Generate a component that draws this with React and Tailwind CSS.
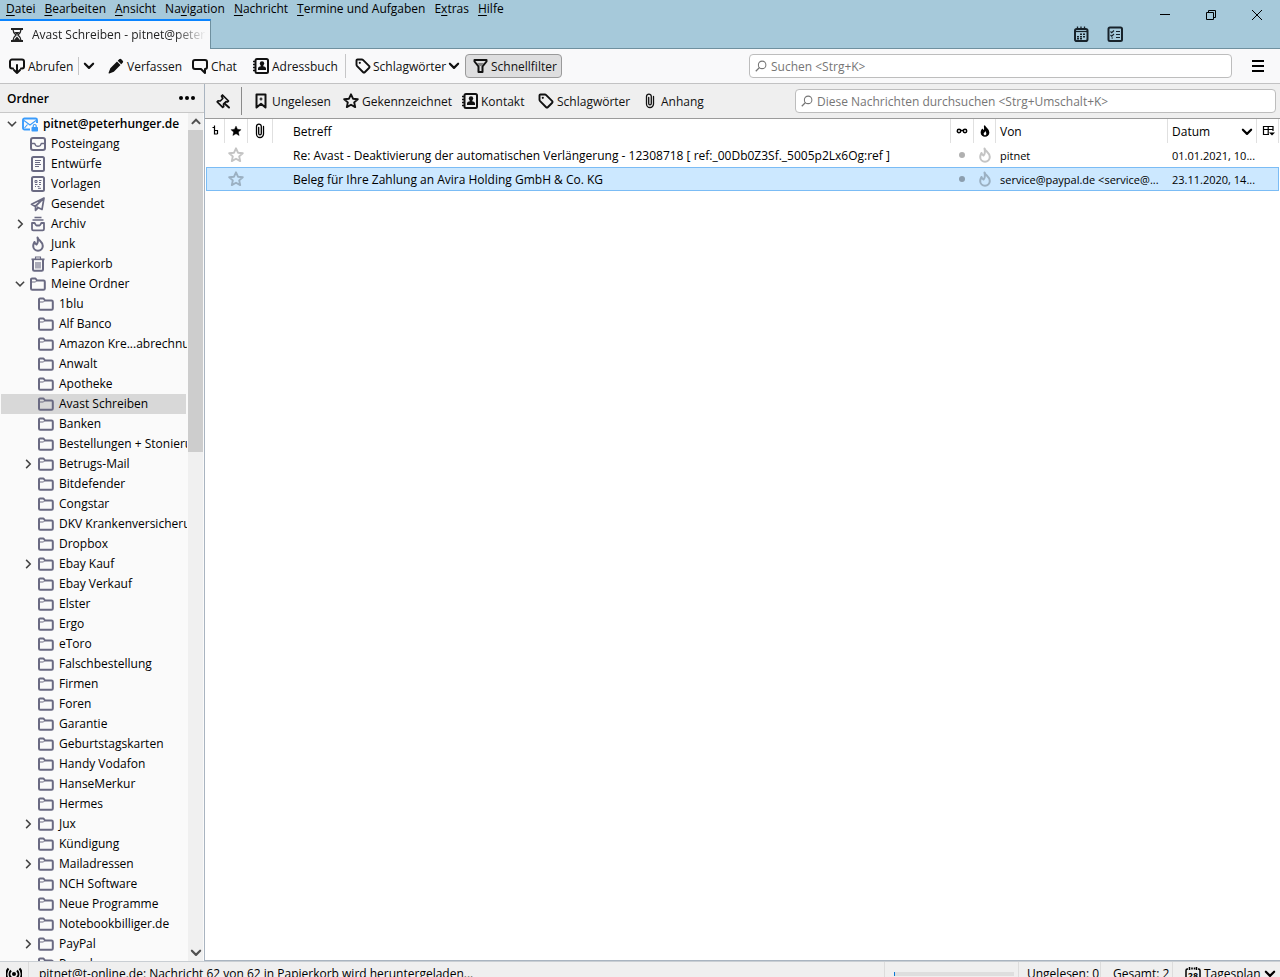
import React from "react";

const stroke = { fill: "none", stroke: "currentColor", strokeWidth: 2, strokeLinejoin: "round", strokeLinecap: "round" };

function Svg({ children, className = "size-4" }) {
  return (
    <svg viewBox="0 0 16 16" className={`${className} shrink-0`} aria-hidden="true">
      {children}
    </svg>
  );
}

const Hourglass = () => (
  <Svg>
    <path d="M2 2h12M2 14h12" stroke="currentColor" strokeWidth="2" />
    <path d="M4 2.500c0 3 1.200 4 3 5.500-1.800 1.500-3 2.500-3 5.500M12 2.500c0 3-1.200 4-3 5.500 1.800 1.500 3 2.500 3 5.500" fill="none" stroke="currentColor" strokeWidth="1.300" />
    <path d="M5.500 5h5L8 8zM8 9.500l3 3.500H5z" fill="currentColor" />
  </Svg>
);
const Download = () => (
  <Svg>
    <path d="M4 10.500H3a2 2 0 0 1-2-2V3.500a2 2 0 0 1 2-2h10a2 2 0 0 1 2 2v5a2 2 0 0 1-2 2h-1" {...stroke} />
    <path d="M8 7v8M5 12l3 3 3-3" {...stroke} />
  </Svg>
);
const Pencil = () => (
  <Svg>
    <path d="M11.200 1.300a1.500 1.500 0 0 1 2.100 0l1.400 1.400a1.500 1.500 0 0 1 0 2.100l-1.500 1.500-3.500-3.500zM9 3.500L12.500 7l-6.700 6.700-4.500 1.700a.5.5 0 0 1-.7-.7l1.700-4.500z" fill="currentColor" />
  </Svg>
);
const Chat = () => (
  <Svg>
    <path d="M3 2h10a2 2 0 0 1 2 2v5a2 2 0 0 1-2 2v4L9 11H3a2 2 0 0 1-2-2V4a2 2 0 0 1 2-2z" {...stroke} />
  </Svg>
);
const Book = () => (
  <Svg>
    <rect x="2.500" y="1" width="12.500" height="14" rx="1.500" fill="none" stroke="currentColor" strokeWidth="2" />
    <path d="M0 3.500h3M0 6.500h3M0 9.500h3M0 12.500h3" stroke="currentColor" strokeWidth="1.500" />
    <circle cx="9" cy="5.500" r="2.200" fill="currentColor" />
    <path d="M5 12V10.500C5 9 7 8.500 7.800 8.300V7h2.400v1.300c.8.200 2.800.7 2.800 2.200V12z" fill="currentColor" />
  </Svg>
);
const Tag = () => (
  <Svg>
    <path d="M1.500 2.500a1 1 0 0 1 1-1h4.300a2 2 0 0 1 1.400.6l5.800 5.800a1.500 1.500 0 0 1 0 2.100L10 14a1.500 1.500 0 0 1-2.100 0L2.100 8.200a2 2 0 0 1-.6-1.400z" fill="none" stroke="currentColor" strokeWidth="1.900" />
    <circle cx="4.800" cy="4.800" r="1.100" fill="currentColor" />
  </Svg>
);
const Funnel = () => (
  <Svg>
    <path d="M1.500 2h12v1.500L9.500 8.500V14h-4V8.500l-4-5z" {...stroke} />
    <path d="M4 5h7L8.500 8h-2z" fill="currentColor" opacity=".45" />
  </Svg>
);
const Pin = () => (
  <Svg>
    <path d="M7.500 2l6 6-1.200 1-1.300-.3-2.500 2.500.2 2.300-1 .8-5.500-5.500.9-1 2.200.2 2.500-2.500L6.500 3z" fill="none" stroke="currentColor" strokeWidth="1.700" strokeLinejoin="round" />
    <path d="M9.500 10.500l4.500 4" {...stroke} />
  </Svg>
);
const Bookmark = () => (
  <Svg>
    <path d="M3.500 1.500h9v13L8 10.800l-4.500 3.700z" {...stroke} />
    <path d="M8 4.500v3M6.500 6h3" stroke="currentColor" strokeWidth="1.200" />
  </Svg>
);
const STAR = "M8 1.300l2 4.400 4.800.5-3.600 3.200 1 4.700L8 11.700l-4.200 2.400 1-4.700L1.200 6.200 6 5.700z";
const Star = ({ solid, className }) => (
  <Svg className={className}>
    <path d={STAR} fill={solid ? "currentColor" : "none"} stroke="currentColor" strokeWidth={solid ? 0.5 : 1.9} strokeLinejoin="round" />
  </Svg>
);
const Paperclip = () => (
  <Svg>
    <path d="M6.700 5v6a1.300 1.300 0 0 0 2.600 0V4a2.400 2.400 0 0 0-4.800 0v7.500a3.500 3.500 0 0 0 7 0V4" transform="translate(0 -.5)" fill="none" stroke="currentColor" strokeWidth="1.300" strokeLinecap="round" />
  </Svg>
);
const Magnifier = () => (
  <Svg className="size-3">
    <circle cx="9.500" cy="6.500" r="5" fill="none" stroke="currentColor" strokeWidth="1.400" />
    <path d="M6 10l-5 5" stroke="currentColor" strokeWidth="1.600" />
  </Svg>
);
const Down = ({ thin, className = "size-3" }) => (
  <Svg className={className}>
    <path d="M2.500 5l5.500 5.500L13.500 5" fill="none" stroke="currentColor" strokeWidth={thin ? 2 : 2.9} strokeLinecap={thin ? "butt" : "round"} strokeLinejoin={thin ? "miter" : "round"} />
  </Svg>
);
const Up = () => (
  <Svg className="size-3">
    <path d="M2.500 10.500L8 5l5.500 5.500" fill="none" stroke="currentColor" strokeWidth="2.600" />
  </Svg>
);
const Right = () => (
  <Svg className="size-3">
    <path d="M5.500 2.500L11 8l-5.500 5.500" fill="none" stroke="currentColor" strokeWidth="2" />
  </Svg>
);
const Calendar = () => (
  <Svg>
    <rect x="2" y="3" width="12.500" height="12" rx="1.800" fill="none" stroke="currentColor" strokeWidth="2" />
    <path d="M4.500 .5v3M8 .5v3M11.500 .5v3" stroke="currentColor" strokeWidth="1.300" />
    <path d="M2 5.500h12" stroke="currentColor" strokeWidth="1.200" />
    <path d="M7 8.300h2M10 8.300h2M4 10.800h2M7 10.800h2M10 10.800h2M4 12.800h2M7 12.800h2" stroke="currentColor" strokeWidth="1.500" />
  </Svg>
);
const Tasks = () => (
  <Svg>
    <rect x="1.500" y="1.500" width="13.500" height="13.500" rx="1.500" fill="none" stroke="currentColor" strokeWidth="2" />
    <path d="M3.500 5.500l1.200 1.200L7 4.500M3.500 9l1.200 1.200L7 8M9 5.500h4M9 8.500h4M9 11.500h4M4.500 12h1.500" fill="none" stroke="currentColor" strokeWidth="1.100" />
  </Svg>
);
const Account = () => (
  <Svg className="size-4 text-[#3a9bfb]">
    <path d="M8 13.500H2.500A1.500 1.500 0 0 1 1 12V4a1.500 1.500 0 0 1 1.500-1.500h11A1.500 1.500 0 0 1 15 4v3" fill="none" stroke="currentColor" strokeWidth="1.900" />
    <path d="M2 4.500l6 4.500 6-4.500M2.500 12l3-3.500" fill="none" stroke="currentColor" strokeWidth="1.100" />
    <rect x="9.500" y="11" width="6.500" height="4.500" rx=".8" fill="currentColor" />
    <path d="M11.200 11.500V10a1.500 1.500 0 0 1 3 0v1.500" fill="none" stroke="currentColor" strokeWidth="1.200" />
  </Svg>
);
const Inbox = () => (
  <Svg>
    <rect x="1" y="2" width="14" height="12" rx="2" fill="none" stroke="currentColor" strokeWidth="2" />
    <path d="M1 7.500h3.500c.5 0 .8 1.800 1.500 2.300s3.300.5 4 0 1-2.300 1.500-2.300H15" fill="none" stroke="currentColor" strokeWidth="1.400" />
  </Svg>
);
const Draft = () => (
  <Svg>
    <rect x="2" y="1" width="12" height="14" rx="1.500" fill="none" stroke="currentColor" strokeWidth="2" />
    <path d="M5 4.500h6M5 6.500h5M5 8.500h6M5 10.500h4" stroke="currentColor" strokeWidth="1" />
  </Svg>
);
const Template = () => (
  <Svg>
    <rect x="2" y="1" width="12" height="14" rx="1.500" fill="none" stroke="currentColor" strokeWidth="2" />
    <path d="M5 4.500h2v2H5zM9 4.500h2.500M9 6.500h2M5 8.500h2.500M9 8.500h2M5 10.500h1M7.500 10.500h2M8 12.300h3" fill="none" stroke="currentColor" strokeWidth="1" />
  </Svg>
);
const Sent = () => (
  <Svg>
    <path d="M14 2L1.500 8.300 5 10.300zM14 2L5.500 10.500V14.300L8 11.800M14 2l-2 11.500-4.500-2.300" {...stroke} strokeWidth="1.700" />
  </Svg>
);
const Archive = () => (
  <Svg>
    <path d="M4.500 1.500h7M2.500 4h11" stroke="currentColor" strokeWidth="1.300" />
    <path d="M2 7h2.500C5 7 5.500 9.500 6.500 9.500h3c1 0 1.500-2.500 2-2.500H14v6a1.300 1.300 0 0 1-1.300 1.300H3.300A1.300 1.300 0 0 1 2 13z" {...stroke} strokeWidth="1.800" />
  </Svg>
);
const FLAME = "M7.500 1.500C8.500 4.500 12.800 5.500 12.800 10a4.800 4.800 0 0 1-9.600 0C3.200 8 4 7 4.500 6c.5 1.500 1 2 2 2.500C8 7 8.200 4.500 7.500 1.500z";
const Flame = ({ solid }) => (
  <Svg className={solid ? "size-3" : "size-4"}>
    <path d={FLAME} fill={solid ? "currentColor" : "none"} stroke="currentColor" strokeWidth="2" strokeLinejoin="round" />
    {solid && <path d="M8.500 7.500c0 1.500 1.300 2 1.300 4 0 1.300-1 2-1.800 2s-1.800-.7-1.800-2C6.200 10 8.200 9.500 8.500 7.500z" fill="#fff" />}
  </Svg>
);
const Trash = () => (
  <Svg>
    <path d="M3 4v9.500A1.300 1.300 0 0 0 4.300 14.800h7.400A1.300 1.300 0 0 0 13 13.500V4" fill="none" stroke="currentColor" strokeWidth="2" />
    <path d="M1.500 3.300h13" stroke="currentColor" strokeWidth="1.700" />
    <path d="M5.500 3V1h5v2M6 6v6.500M8 6v6.500M10 6v6.500" fill="none" stroke="currentColor" strokeWidth="1.100" />
  </Svg>
);
const Folder = () => (
  <Svg>
    <path d="M1 12.500V3.500A1 1 0 0 1 2 2.500h3.500L7 4.500h6.500A1.300 1.300 0 0 1 14.800 5.800v6.700a1.300 1.300 0 0 1-1.300 1.300H2.300A1.300 1.300 0 0 1 1 12.500z" fill="none" stroke="currentColor" strokeWidth="2" strokeLinejoin="round" />
    <path d="M2 6h3.500L7 4.500" fill="none" stroke="currentColor" strokeWidth="1" />
  </Svg>
);
const Thread = () => (
  <Svg>
    <path d="M7.500 2.500v8.500h3M5.500 4.500h2M7.500 7.500h3V11" fill="none" stroke="currentColor" strokeWidth="1.200" />
  </Svg>
);
const Glasses = () => (
  <Svg>
    <circle cx="5" cy="8" r="1.700" fill="none" stroke="currentColor" strokeWidth="1.500" />
    <circle cx="11" cy="8" r="1.700" fill="none" stroke="currentColor" strokeWidth="1.500" />
    <path d="M6.500 7.500h3" stroke="currentColor" strokeWidth="1.500" />
  </Svg>
);
const Picker = () => (
  <Svg>
    <path d="M13 8V3.500H3.500v8H9M3.500 6.500H13M8.200 3.500v8" fill="none" stroke="currentColor" strokeWidth="1.200" />
    <path d="M9 9.500h6l-3 3z" fill="currentColor" />
  </Svg>
);
const Online = () => (
  <Svg>
    <circle cx="8" cy="8" r="2" fill="currentColor" />
    <path d="M5 4.500a5 5 0 0 0 0 7M11 4.500a5 5 0 0 1 0 7M2.500 2.500a8 8 0 0 0 0 11M13.500 2.500a8 8 0 0 1 0 11" fill="none" stroke="currentColor" strokeWidth="2" />
  </Svg>
);

const MENUS = [
  ["", "D", "atei"],
  ["", "B", "earbeiten"],
  ["", "A", "nsicht"],
  ["Na", "v", "igation"],
  ["", "N", "achricht"],
  ["", "T", "ermine und Aufgaben"],
  ["E", "x", "tras"],
  ["", "H", "ilfe"],
];

const f = (name, opts = {}) => ({ name, level: 2, icon: Folder, ...opts });
const FOLDERS = [
  { name: "pitnet@peterhunger.de", level: 0, icon: Account, twisty: "open" },
  { name: "Posteingang", level: 1, icon: Inbox },
  { name: "Entwürfe", level: 1, icon: Draft },
  { name: "Vorlagen", level: 1, icon: Template },
  { name: "Gesendet", level: 1, icon: Sent },
  { name: "Archiv", level: 1, icon: Archive, twisty: "closed" },
  { name: "Junk", level: 1, icon: Flame },
  { name: "Papierkorb", level: 1, icon: Trash },
  { name: "Meine Ordner", level: 1, icon: Folder, twisty: "open" },
  f("1blu"),
  f("Alf Banco"),
  f("Amazon Kre...abrechnung"),
  f("Anwalt"),
  f("Apotheke"),
  f("Avast Schreiben", { selected: true }),
  f("Banken"),
  f("Bestellungen + Stonierung"),
  f("Betrugs-Mail", { twisty: "closed" }),
  f("Bitdefender"),
  f("Congstar"),
  f("DKV Krankenversicherung"),
  f("Dropbox"),
  f("Ebay Kauf", { twisty: "closed" }),
  f("Ebay Verkauf"),
  f("Elster"),
  f("Ergo"),
  f("eToro"),
  f("Falschbestellung"),
  f("Firmen"),
  f("Foren"),
  f("Garantie"),
  f("Geburtstagskarten"),
  f("Handy Vodafon"),
  f("HanseMerkur"),
  f("Hermes"),
  f("Jux", { twisty: "closed" }),
  f("Kündigung"),
  f("Mailadressen", { twisty: "closed" }),
  f("NCH Software"),
  f("Neue Programme"),
  f("Notebookbilliger.de"),
  f("PayPal", { twisty: "closed" }),
  f("Porsche"),
];
const INDENT = ["pl-1", "pl-3", "pl-5"];

const MAILS = [
  {
    subject: "Re: Avast - Deaktivierung der automatischen Verlängerung - 12308718 [ ref:_00Db0Z3Sf._5005p2Lx6Og:ref ]",
    from: "pitnet",
    date: "01.01.2021, 10...",
  },
  {
    subject: "Beleg für Ihre Zahlung an Avira Holding GmbH & Co. KG",
    from: "service@paypal.de <service@...",
    date: "23.11.2020, 14...",
    selected: true,
  },
];

function TitleBar() {
  return (
    <header className="flex shrink-0 border-b border-[#6f909f] bg-[#a6c9da]">
      <div className="flex min-w-0 flex-1 flex-col">
        <nav className="flex h-[19px] items-center gap-[9px] pb-[2px] pl-[6px]">
          {MENUS.map(([pre, key, post]) => (
            <button key={pre + key + post} className="whitespace-nowrap leading-4">
              {pre}
              <span className="underline underline-offset-2">{key}</span>
              {post}
            </button>
          ))}
        </nav>
        <div className="-mb-px flex h-[30px]">
          <button className="flex w-[211px] items-center gap-[7px] border-t-2 border-r border-t-[#0a84ff] border-r-[#6f909f] bg-[#f9f9fa] pr-1 pl-[9px] text-left text-[#222]">
            <Hourglass />
            <span className="min-w-0 flex-1 overflow-hidden whitespace-nowrap [mask-image:linear-gradient(to_left,transparent,black_32px)]">
              Avast Schreiben - pitnet@peterhunger.de
            </span>
          </button>
        </div>
      </div>
      <div className="flex items-end gap-[18px] pr-[19px] pb-[6px] text-[#17222a]">
        <button aria-label="Kalender"><Calendar /></button>
        <button aria-label="Aufgaben"><Tasks /></button>
      </div>
      <div className="flex h-[30px]">
        <button aria-label="Minimieren" className="grid w-[46px] place-items-center">
          <svg viewBox="0 0 10 10" className="size-[10px]"><path d="M0 4.500h10" stroke="black" /></svg>
        </button>
        <button aria-label="Wiederherstellen" className="grid w-[46px] place-items-center">
          <svg viewBox="0 0 10 10" className="size-[10px]"><path d="M.5 2.500h7v7h-7zM2.500 2.500v-2h7v7h-2" fill="none" stroke="black" /></svg>
        </button>
        <button aria-label="Schließen" className="grid w-[46px] place-items-center">
          <svg viewBox="0 0 10 10" className="size-[10px]"><path d="M0 0l10 10M10 0L0 10" stroke="black" /></svg>
        </button>
      </div>
    </header>
  );
}

function ToolButton({ icon: Icon, children, className = "" }) {
  return (
    <button className={`flex shrink-0 items-center gap-[3px] whitespace-nowrap text-left ${className}`}>
      <Icon />
      <span className="pt-[2px]">{children}</span>
    </button>
  );
}

function SearchBox({ label, className }) {
  return (
    <label className={`flex h-6 items-center gap-1 rounded-sm border border-[#bdbdbd] bg-white px-[5px] text-[#767676] ${className}`}>
      <Magnifier />
      <input type="search" aria-label={label} placeholder={label} className="min-w-0 flex-1 bg-transparent pt-[2px] outline-none placeholder:text-[#767676]" />
    </label>
  );
}

function Toolbar() {
  return (
    <div className="flex h-[35px] shrink-0 items-center border-b border-[#c2c2c3] bg-[#f9f9fa] pl-[9px] text-[#111]">
      <ToolButton icon={Download} className="w-[69px]">Abrufen</ToolButton>
      <button aria-label="Abrufen: Optionen" className="flex h-[18px] w-[30px] items-center border-l border-[#c6c6c7] pl-1">
        <Down />
      </button>
      <ToolButton icon={Pencil} className="w-[84px]">Verfassen</ToolButton>
      <ToolButton icon={Chat} className="w-[61px]">Chat</ToolButton>
      <ToolButton icon={Book} className="w-[92px]">Adressbuch</ToolButton>
      <div className="h-6 w-[10px] border-l border-[#c6c6c7]" />
      <button className="flex w-[110px] shrink-0 items-center gap-[2px]">
        <Tag />
        <span className="pt-[2px]">Schlagwörter</span>
        <Down />
      </button>
      <button aria-pressed="true" className="flex h-6 shrink-0 items-center gap-[2px] rounded-sm border border-[#9a9a9a] bg-[#dededf] pr-1 pl-[7px]">
        <Funnel />
        <span className="pt-[2px]">Schnellfilter</span>
      </button>
      <SearchBox label="Suchen <Strg+K>" className="ml-auto w-[483px]" />
      <button aria-label="Anwendungsmenü" className="flex w-12 flex-col items-center gap-[3px] pl-1">
        <span className="h-[2px] w-3 bg-black" />
        <span className="h-[2px] w-3 bg-black" />
        <span className="h-[2px] w-3 bg-black" />
      </button>
    </div>
  );
}

function Sidebar() {
  return (
    <aside className="flex w-[205px] shrink-0 flex-col border-r border-[#a9b4c0] bg-[#fafafa]">
      <div className="flex h-[29px] shrink-0 items-center justify-between border-b border-[#c8c8c8] bg-[#efefef] pr-[9px] pl-[7px]">
        <h2 className="pt-[2px] font-semibold">Ordner</h2>
        <button aria-label="Optionen" className="flex gap-[2px]">
          <span className="size-1 rounded-full bg-black" />
          <span className="size-1 rounded-full bg-black" />
          <span className="size-1 rounded-full bg-black" />
        </button>
      </div>
      <div className="flex min-h-0 flex-1">
        <ul className="min-w-0 flex-1 overflow-hidden pt-px pl-px">
          {FOLDERS.map(({ name, level, icon: Icon, twisty, selected }) => (
            <li key={name} className={selected ? "mr-[2px] bg-[#d8d8d8]" : "mr-[1px]"}>
              <button className={`flex h-5 w-full items-center overflow-hidden whitespace-nowrap ${INDENT[level]}`}>
                <span className="-ml-px grid w-4 shrink-0 place-items-center text-[#444]">
                  {twisty === "open" && <Down thin />}
                  {twisty === "closed" && <Right />}
                </span>
                <span className="ml-[2px] text-[#6a6a82]"><Icon /></span>
                <span className={`ml-[5px] ${level === 0 ? "font-semibold" : ""}`}>{name}</span>
              </button>
            </li>
          ))}
        </ul>
        <div className="mr-px flex w-[15px] shrink-0 flex-col bg-[#f0f0f0] text-[#505050]">
          <button aria-label="Nach oben" className="grid h-[17px] shrink-0 place-items-center"><Up /></button>
          <div className="h-[38%] bg-[#cdcdcd]" />
          <button aria-label="Nach unten" className="mt-auto grid h-[17px] shrink-0 place-items-center"><Down /></button>
        </div>
      </div>
    </aside>
  );
}

function FilterBar() {
  return (
    <div className="flex h-[35px] shrink-0 items-center border-b border-[#9b9b9b] bg-[#efefef] pr-1 pl-[10px] text-[#111]">
      <button aria-label="Filter beibehalten" className="w-[26px]"><Pin /></button>
      <div className="h-7 w-[12px] border-l border-[#8a8a8a]" />
      <ToolButton icon={Bookmark} className="w-[90px]">Ungelesen</ToolButton>
      <ToolButton icon={Star} className="w-[119px]">Gekennzeichnet</ToolButton>
      <ToolButton icon={Book} className="w-[76px]">Kontakt</ToolButton>
      <ToolButton icon={Tag} className="w-[104px]">Schlagwörter</ToolButton>
      <ToolButton icon={Paperclip}>Anhang</ToolButton>
      <SearchBox label="Diese Nachrichten durchsuchen <Strg+Umschalt+K>" className="ml-auto w-[481px]" />
    </div>
  );
}

function MessageTable() {
  const th = "border-r border-[#e0e0e0] p-0 font-normal";
  return (
    <table className="w-full table-fixed border-separate border-spacing-0 pr-px pl-px text-left">
      <colgroup>
        <col className="w-[19px]" />
        <col className="w-[23px]" />
        <col className="w-[25px]" />
        <col />
        <col className="w-[23px]" />
        <col className="w-[22px]" />
        <col className="w-[172px]" />
        <col className="w-[89px]" />
        <col className="w-[22px]" />
      </colgroup>
      <thead>
        <tr className="h-6">
          <th className={th}><button aria-label="Thema" className="grid w-full place-items-center"><Thread /></button></th>
          <th className={th}><button aria-label="Stern" className="grid w-full place-items-center"><Star solid className="size-3" /></button></th>
          <th className={th}><button aria-label="Anhang" className="grid w-full place-items-center"><Paperclip /></button></th>
          <th className={`${th} pt-[2px] pl-5`}>Betreff</th>
          <th className={th}><button aria-label="Gelesen" className="grid w-full place-items-center"><Glasses /></button></th>
          <th className={th}><button aria-label="Junk" className="grid w-full place-items-center"><Flame solid /></button></th>
          <th className={`${th} pt-[2px] pl-1`}>Von</th>
          <th className={`${th} pt-[2px] pr-[3px] pl-1`}>
            <button className="flex w-full items-center justify-between">Datum <Down /></button>
          </th>
          <th className={th}><button aria-label="Spalten wählen" className="grid w-full place-items-center"><Picker /></button></th>
        </tr>
      </thead>
      <tbody>
        {MAILS.map(({ subject, from, date, selected }) => {
          const td = selected ? "border-y border-[#7bbcf5] bg-[#cce8ff] p-0" : "p-0";
          const dim = selected ? "text-[#9bb0c2]" : "text-[#c4c4c4]";
          return (
            <tr key={subject} className="h-6">
              <td className={`${td} ${selected ? "border-l" : ""}`} />
              <td className={`${td} ${dim}`}><div className="grid place-items-center pr-px"><Star /></div></td>
              <td className={td} />
              <td className={td}><div className="truncate pt-[2px] pl-5">{subject}</div></td>
              <td className={`${td} ${dim}`}><div className="grid place-items-center pr-px"><span className="size-[6px] rounded-full bg-current brightness-90" /></div></td>
              <td className={`${td} ${dim}`}><div className="grid place-items-center pr-px"><Flame /></div></td>
              <td className={td}><div className="pt-[2px] pl-1 text-[11px] whitespace-nowrap">{from}</div></td>
              <td className={td}><div className="pt-[2px] pl-1 text-[11px] whitespace-nowrap">{date}</div></td>
              <td className={`${td} ${selected ? "border-r" : ""}`} />
            </tr>
          );
        })}
      </tbody>
    </table>
  );
}

function StatusBar() {
  const cell = "flex h-full items-center border-l border-[#dcdcdc]";
  return (
    <footer className="h-4 shrink-0 overflow-hidden border-t border-[#c9ced3] bg-[#efefef]">
      <div className="flex h-6 items-center whitespace-nowrap">
        <span className="w-[28px] pl-[6px]"><Online /></span>
        <span className={`${cell} min-w-0 flex-1 pl-[10px]`}>pitnet@t-online.de: Nachricht 62 von 62 in Papierkorb wird heruntergeladen...</span>
        <span className={`${cell} w-[134px] pl-[9px]`}>
          <span className="h-1 w-[120px] border-l border-[#0a78d7] bg-[#dedede]" />
        </span>
        <span className={`${cell} w-[82px] pl-2`}>Ungelesen: 0</span>
        <span className={`${cell} w-[72px] pl-3`}>Gesamt: 2</span>
        <button className={`${cell} w-[108px] gap-[3px] pl-[12px]`}>
          <svg viewBox="0 0 16 16" className="size-4 shrink-0" aria-hidden="true">
            <path d="M3 3H2.500A1.500 1.500 0 0 0 1 4.500v9A1.500 1.500 0 0 0 2.500 15h11a1.500 1.500 0 0 0 1.500-1.500v-9A1.500 1.500 0 0 0 13.500 3H13M4.500 1v3M7 1.500v2M9.500 1.500v2M11.500 1v3" fill="none" stroke="currentColor" strokeWidth="1.500" />
            <text x="8" y="12.500" fontSize="9" fontWeight="bold" textAnchor="middle" fill="currentColor">28</text>
          </svg>
          <span>Tagesplan</span>
          <Down />
        </button>
      </div>
    </footer>
  );
}

export default function App() {
  return (
    <div className="flex h-screen flex-col overflow-hidden bg-white font-['Open_Sans','Noto_Sans',sans-serif] text-[12px] leading-4 text-black">
      <TitleBar />
      <Toolbar />
      <div className="flex min-h-0 flex-1">
        <Sidebar />
        <main className="flex min-w-0 flex-1 flex-col border-b border-[#a9b4c0] bg-white">
          <FilterBar />
          <MessageTable />
        </main>
      </div>
      <StatusBar />
    </div>
  );
}
